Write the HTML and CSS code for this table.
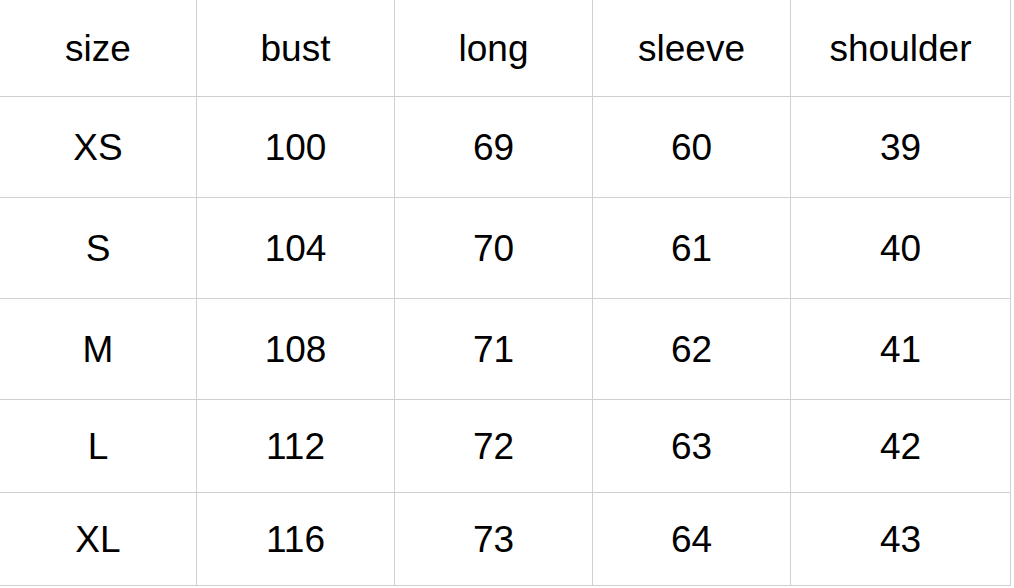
FILE: index.html
```html
<!DOCTYPE html>
<html>
<head>
<meta charset="utf-8">
<link rel="stylesheet" href="styles.css">
</head>
<body>
<div class="sheet">
  <div class="cell r0">size</div><div class="cell r0">bust</div><div class="cell r0">long</div><div class="cell r0">sleeve</div><div class="cell r0">shoulder</div>
  <div class="cell r1">XS</div><div class="cell r1">100</div><div class="cell r1">69</div><div class="cell r1">60</div><div class="cell r1">39</div>
  <div class="cell r1">S</div><div class="cell r1">104</div><div class="cell r1">70</div><div class="cell r1">61</div><div class="cell r1">40</div>
  <div class="cell r1">M</div><div class="cell r1">108</div><div class="cell r1">71</div><div class="cell r1">62</div><div class="cell r1">41</div>
  <div class="cell r2">L</div><div class="cell r2">112</div><div class="cell r2">72</div><div class="cell r2">63</div><div class="cell r2">42</div>
  <div class="cell r2">XL</div><div class="cell r2">116</div><div class="cell r2">73</div><div class="cell r2">64</div><div class="cell r2">43</div>
</div>
</body>
</html>
```
FILE: styles.css
```css
html, body {
  margin: 0;
  padding: 0;
  background: #ffffff;
}
.sheet {
  display: grid;
  grid-template-columns: 197px 198px 198px 198px 220px;
  grid-template-rows: 97px 101px 101px 101px 93px 93px;
  font-family: "Liberation Sans", Arial, sans-serif;
  font-size: 37px;
  color: #000;
  width: 1011px;
}
.cell {
  box-sizing: border-box;
  border-right: 1px solid #d0d0d0;
  border-bottom: 1px solid #d0d0d0;
  display: flex;
  align-items: center;
  justify-content: center;
  line-height: 1;
}
```
